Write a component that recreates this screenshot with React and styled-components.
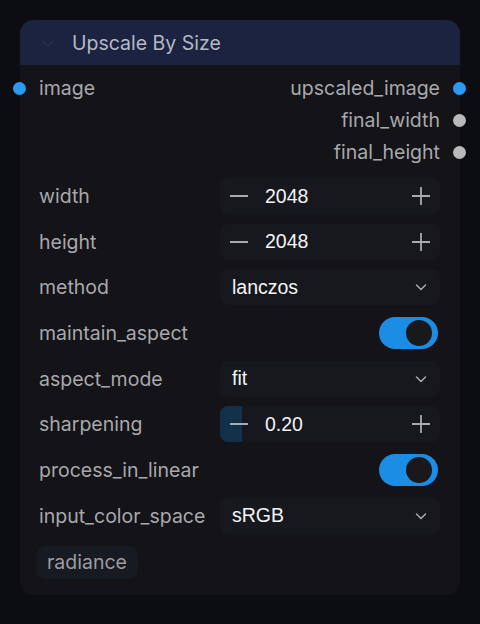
import React from "react";
import styled, { createGlobalStyle } from "styled-components";

const GlobalStyle = createGlobalStyle`
  html, body {
    margin: 0;
    padding: 0;
    background: #0c0d12;
  }
  body {
    font-family: Inter, "Noto Sans", sans-serif;
  }
`;

const Page = styled.div`
  min-height: 100vh;
  box-sizing: border-box;
  padding: 20px;
  background: #0c0d12;
`;

const Node = styled.div`
  position: relative;
  background: #141317;
  border-radius: 14px;
  padding-bottom: 16px;
`;

const Header = styled.div`
  display: flex;
  align-items: center;
  height: 45px;
  padding-left: 20px;
  gap: 16px;
  background: #1c2340;
  border-radius: 14px 14px 0 0;
  color: #b4b8c6;
  font-size: 19.5px;
`;

const Slots = styled.div`
  padding: 7px 20px 0 19px;
  display: grid;
  grid-template-columns: 1fr 1fr;
`;

const SlotRow = styled.div`
  grid-column: ${(p) => (p.$right ? 2 : 1)};
  grid-row: ${(p) => p.$row};
  position: relative;
  height: 32px;
  display: flex;
  align-items: center;
  justify-content: ${(p) => (p.$right ? "flex-end" : "flex-start")};
  color: #a8a8ad;
  font-size: 19.5px;
  white-space: nowrap;
`;

const Dot = styled.span`
  position: absolute;
  top: 50%;
  ${(p) => (p.$right ? "right: -26px;" : "left: -26px;")}
  width: 13px;
  height: 13px;
  margin-top: -6.5px;
  border-radius: 50%;
  background: ${(p) => p.$color};
`;

const Widgets = styled.div`
  margin-top: 10px;
  padding: 0 20px 0 19px;
  display: flex;
  flex-direction: column;
  gap: 9.7px;
`;

const Row = styled.div`
  display: grid;
  grid-template-columns: 1fr 220px;
  align-items: center;
  height: 36px;
`;

const Label = styled.span`
  color: #a8a8ad;
  font-size: 19.5px;
  white-space: nowrap;
`;

const Box = styled.div`
  position: relative;
  height: 36px;
  display: flex;
  align-items: center;
  background: #17181d;
  border-radius: 8px;
  color: #f4f4f6;
  font-family: "Liberation Sans", Arial, sans-serif;
  font-size: 19.5px;
  overflow: hidden;
`;

const Fill = styled.div`
  position: absolute;
  left: 0;
  top: 0;
  bottom: 0;
  width: ${(p) => p.$w}px;
  background: #13304b;
`;

const StepBtn = styled.span`
  position: relative;
  width: 38px;
  display: flex;
  justify-content: center;
  align-items: center;
  color: #a9a9ae;
`;

const Value = styled.span`
  position: relative;
  flex: 1;
  padding-left: ${(p) => p.$pad || 0}px;
`;

const Toggle = styled.div`
  justify-self: end;
  margin-right: 2px;
  width: 59px;
  height: 32px;
  border-radius: 16px;
  background: #1b8de4;
  position: relative;
`;

const Knob = styled.span`
  position: absolute;
  right: 6px;
  top: 3px;
  width: 26px;
  height: 26px;
  border-radius: 50%;
  background: #19191b;
`;

const Badge = styled.div`
  display: inline-flex;
  align-items: center;
  margin: 12px 0 0 17px;
  height: 33px;
  padding: 0 11px 0 10px;
  background: #171a21;
  border-radius: 8px;
  color: #9c9ca2;
  font-size: 19.5px;
`;

const Minus = () => (
  <svg width="20" height="20" viewBox="0 0 20 20">
    <path d="M1 10h18" stroke="currentColor" strokeWidth="1.8" />
  </svg>
);

const Plus = () => (
  <svg width="20" height="20" viewBox="0 0 20 20">
    <path d="M1 10h18M10 1v18" stroke="currentColor" strokeWidth="1.8" />
  </svg>
);

const Chevron = ({ color = "#a9a9ae", size = 14 }) => (
  <svg width={size} height={size} viewBox="0 0 14 14">
    <path d="M2.5 5l4.5 4.5L11.5 5" fill="none" stroke={color} strokeWidth="1.5" strokeLinecap="round" strokeLinejoin="round" />
  </svg>
);

function NumberBox({ value, fill }) {
  return (
    <Box>
      {fill ? <Fill $w={fill} /> : null}
      <StepBtn>
        <Minus />
      </StepBtn>
      <Value $pad={7}>{value}</Value>
      <StepBtn>
        <Plus />
      </StepBtn>
    </Box>
  );
}

function SelectBox({ value }) {
  return (
    <Box>
      <Value $pad={12}>{value}</Value>
      <StepBtn>
        <Chevron />
      </StepBtn>
    </Box>
  );
}

function Switch() {
  return (
    <Toggle>
      <Knob />
    </Toggle>
  );
}

const widgets = [
  { label: "width", type: "number", value: "2048" },
  { label: "height", type: "number", value: "2048" },
  { label: "method", type: "select", value: "lanczos" },
  { label: "maintain_aspect", type: "toggle" },
  { label: "aspect_mode", type: "select", value: "fit" },
  { label: "sharpening", type: "number", value: "0.20", fill: 22 },
  { label: "process_in_linear", type: "toggle" },
  { label: "input_color_space", type: "select", value: "sRGB" },
];

export default function App() {
  return (
    <>
      <GlobalStyle />
      <Page>
        <Node>
          <Header>
            <Chevron color="#252c4a" size={16} />
            <span>Upscale By Size</span>
          </Header>

          <Slots>
            <SlotRow $row={1}>
              <Dot $color="#2b9af3" />
              image
            </SlotRow>
            <SlotRow $right $row={1}>
              upscaled_image
              <Dot $right $color="#2b9af3" />
            </SlotRow>
            <SlotRow $right $row={2}>
              final_width
              <Dot $right $color="#b9b9bb" />
            </SlotRow>
            <SlotRow $right $row={3}>
              final_height
              <Dot $right $color="#b9b9bb" />
            </SlotRow>
          </Slots>

          <Widgets>
            {widgets.map((w) => (
              <Row key={w.label}>
                <Label>{w.label}</Label>
                {w.type === "number" && <NumberBox value={w.value} fill={w.fill} />}
                {w.type === "select" && <SelectBox value={w.value} />}
                {w.type === "toggle" && <Switch />}
              </Row>
            ))}
          </Widgets>

          <Badge>radiance</Badge>
        </Node>
      </Page>
    </>
  );
}
